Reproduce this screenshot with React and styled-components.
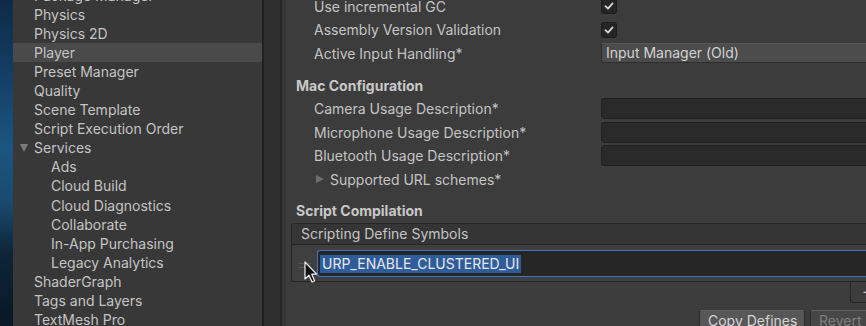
import React from "react";
import styled, { createGlobalStyle } from "styled-components";

const GlobalStyle = createGlobalStyle`
  *, *::before, *::after {
    box-sizing: border-box;
  }
  html, body {
    margin: 0;
    padding: 0;
    background: #3c3c3c;
  }
  body {
    font-family: Inter, "Noto Sans", "Liberation Sans", sans-serif;
    -webkit-font-smoothing: antialiased;
  }
`;

const sections = [
  { label: "Package Manager" },
  { label: "Physics" },
  { label: "Physics 2D" },
  { label: "Player", selected: true },
  { label: "Preset Manager" },
  { label: "Quality" },
  { label: "Scene Template" },
  { label: "Script Execution Order" },
  { label: "Services", open: true },
  { label: "Ads", child: true },
  { label: "Cloud Build", child: true },
  { label: "Cloud Diagnostics", child: true },
  { label: "Collaborate", child: true },
  { label: "In-App Purchasing", child: true },
  { label: "Legacy Analytics", child: true },
  { label: "ShaderGraph" },
  { label: "Tags and Layers" },
  { label: "TextMesh Pro" },
];

const CheckIcon = () => (
  <svg width="10" height="10" viewBox="0 0 10 10">
    <path
      d="M1.5 5.2 L4 7.6 L8.6 2.4"
      fill="none"
      stroke="#d6d6d6"
      strokeWidth="1.8"
      strokeLinecap="round"
      strokeLinejoin="round"
    />
  </svg>
);

const Cursor = () => (
  <svg width="14" height="23" viewBox="0 0 14 23">
    <path
      d="M1 1 L1 18 L5 14.2 L8 21 L10.6 19.8 L7.7 13.2 L12.6 13.2 Z"
      fill="#111"
      stroke="#f2f2f2"
      strokeWidth="1.2"
      strokeLinejoin="round"
    />
  </svg>
);

const App = () => {
  return (
    <>
      <GlobalStyle />
      <Window>
        <Desktop />
        <Sidebar>
          <SectionList>
            {sections.map((s) => (
              <SectionItem key={s.label} selected={s.selected} child={s.child}>
                {s.open && <DownArrow />}
                {s.label}
              </SectionItem>
            ))}
          </SectionList>
        </Sidebar>
        <Gutter />
        <Content>
          <Stack>
            <FieldRow>
              <Label>Use incremental GC</Label>
              <Checkbox>
                <CheckIcon />
              </Checkbox>
            </FieldRow>
            <FieldRow>
              <Label>Assembly Version Validation</Label>
              <Checkbox>
                <CheckIcon />
              </Checkbox>
            </FieldRow>
            <FieldRow>
              <Label>Active Input Handling*</Label>
              <Dropdown>Input Manager (Old)</Dropdown>
            </FieldRow>

            <Heading>Mac Configuration</Heading>
            <FieldRow>
              <Label>Camera Usage Description*</Label>
              <TextField />
            </FieldRow>
            <FieldRow>
              <Label>Microphone Usage Description*</Label>
              <TextField />
            </FieldRow>
            <FieldRow>
              <Label>Bluetooth Usage Description*</Label>
              <TextField />
            </FieldRow>
            <Foldout>
              <RightArrow />
              Supported URL schemes*
            </Foldout>

            <Heading gap={9}>Script Compilation</Heading>
            <ListBox>
              <ListHeader>Scripting Define Symbols</ListHeader>
              <ListBody>
                <DragHandle />
                <SymbolField>
                  <Selection>URP_ENABLE_CLUSTERED_UI</Selection>
                </SymbolField>
              </ListBody>
              <ListFooter>
                <FooterBox>+</FooterBox>
              </ListFooter>
            </ListBox>
            <ButtonRow>
              <Button>Copy Defines</Button>
              <Button disabled>Revert</Button>
            </ButtonRow>
          </Stack>
        </Content>
        <CursorLayer>
          <Cursor />
        </CursorLayer>
      </Window>
    </>
  );
};

export default App;

const Window = styled.div`
  position: relative;
  width: 866px;
  height: 326px;
  display: flex;
  overflow: hidden;
  font-size: 14px;
  color: #c4c4c4;
`;

const Desktop = styled.div`
  width: 13px;
  flex-shrink: 0;
  background: linear-gradient(
    180deg,
    #0f2a47 0%,
    #144068 25%,
    #1c5581 45%,
    #1a4a70 62%,
    #0e2438 78%,
    #0a1726 100%
  );
`;

const Sidebar = styled.div`
  width: 251px;
  flex-shrink: 0;
  background: #383838;
  border-right: 2px solid #212121;
  overflow: hidden;
`;

const SectionList = styled.div`
  margin-top: -14.5px;
  display: flex;
  flex-direction: column;
`;

const SectionItem = styled.div`
  position: relative;
  height: 19.1px;
  line-height: 19px;
  padding-left: ${(p) => (p.child ? "38px" : "21px")};
  background: ${(p) => (p.selected ? "#4a4a4a" : "transparent")};
  white-space: nowrap;
`;

const DownArrow = styled.span`
  position: absolute;
  left: 7px;
  top: 6px;
  width: 0;
  height: 0;
  border-left: 4.5px solid transparent;
  border-right: 4.5px solid transparent;
  border-top: 8px solid #7a7a7a;
`;

const Gutter = styled.div`
  width: 18px;
  flex-shrink: 0;
  background: #2f2f2f;
  border-right: 2px solid #272727;
`;

const Content = styled.div`
  flex: 1;
  min-width: 0;
  background: #3c3c3c;
  border-left: 4px solid #353535;
  padding-left: 10px;
  overflow: hidden;
`;

const Stack = styled.div`
  margin-top: -5.5px;
  margin-right: -14px;
  display: flex;
  flex-direction: column;
`;

const FieldRow = styled.div`
  display: grid;
  grid-template-columns: 286px 1fr;
  align-items: center;
  height: 23.5px;
  padding-left: 18px;
`;

const Label = styled.div`
  white-space: nowrap;
`;

const Checkbox = styled.div`
  margin-left: 1px;
  width: 16px;
  height: 16px;
  border-radius: 3px;
  background: #252525;
  border: 1px solid #1c1c1c;
  display: flex;
  align-items: center;
  justify-content: center;
`;

const Dropdown = styled.div`
  margin-left: 1px;
  height: 20px;
  border: 1px solid #2e2e2e;
  border-top-color: #555;
  border-radius: 3px;
  background: #4c4c4c;
  padding-left: 4px;
  line-height: 18px;
  color: #d2d2d2;
  white-space: nowrap;
`;

const TextField = styled.div`
  margin-left: 1px;
  height: 21px;
  border: 1px solid #212121;
  border-radius: 3px;
  background: #2a2a2a;
`;

const Heading = styled.div`
  margin-top: ${(p) => p.gap ?? 10}px;
  height: 22px;
  line-height: 22px;
  font-weight: 700;
  color: #c8c8c8;
`;

const Foldout = styled.div`
  height: 23.5px;
  display: flex;
  align-items: center;
  padding-left: 20px;
  gap: 6px;
  white-space: nowrap;
`;

const RightArrow = styled.span`
  width: 0;
  height: 0;
  border-top: 4.5px solid transparent;
  border-bottom: 4.5px solid transparent;
  border-left: 8px solid #6e6e6e;
`;

const ListBox = styled.div`
  margin-top: 1px;
  margin-left: -5px;
  display: flex;
  flex-direction: column;
`;

const ListHeader = styled.div`
  height: 22px;
  line-height: 20px;
  padding-left: 9px;
  background: #353535;
  border: 1px solid #262626;
  border-radius: 3px 0 0 0;
  white-space: nowrap;
`;

const ListBody = styled.div`
  height: 37px;
  display: flex;
  align-items: center;
  gap: 6px;
  padding-left: 7px;
  background: #3f3f3f;
  border: 1px solid #262626;
  border-top: none;
  border-radius: 0 0 0 3px;
`;

const DragHandle = styled.div`
  width: 12px;
  height: 5px;
  margin-top: 4px;
  border-top: 1px solid #555;
  border-bottom: 1px solid #555;
`;

const SymbolField = styled.div`
  flex: 1;
  height: 27px;
  margin-top: 1px;
  border: 1px solid #3c76c0;
  border-right: none;
  border-radius: 3px 0 0 3px;
  background: #262626;
  display: flex;
  align-items: center;
  padding-left: 2px;
`;

const Selection = styled.span`
  background: #2f5d9c;
  color: #e8e8e8;
  line-height: 18px;
  padding: 0 2px;
  white-space: nowrap;
`;

const ListFooter = styled.div`
  display: flex;
  justify-content: flex-end;
`;

const FooterBox = styled.div`
  width: 30px;
  height: 21px;
  border: 1px solid #262626;
  border-top: none;
  border-radius: 0 0 3px 3px;
  background: #3d3d3d;
  padding-left: 11px;
  line-height: 19px;
  font-size: 16px;
  color: #c8c8c8;
`;

const ButtonRow = styled.div`
  margin-top: 7px;
  margin-right: 10px;
  display: flex;
  justify-content: flex-end;
  gap: 5px;
`;

const Button = styled.div`
  height: 22px;
  padding: 0 8px;
  border: 1px solid #2a2a2a;
  border-top-color: #5e5e5e;
  border-radius: 3px;
  background: ${(p) => (p.disabled ? "#474747" : "#575757")};
  color: ${(p) => (p.disabled ? "#7d7d7d" : "#d4d4d4")};
  line-height: 20px;
  white-space: nowrap;
  width: ${(p) => (p.disabled ? "60px" : "106px")};
`;

const CursorLayer = styled.div`
  position: absolute;
  left: 304px;
  top: 261px;
  pointer-events: none;
`;
